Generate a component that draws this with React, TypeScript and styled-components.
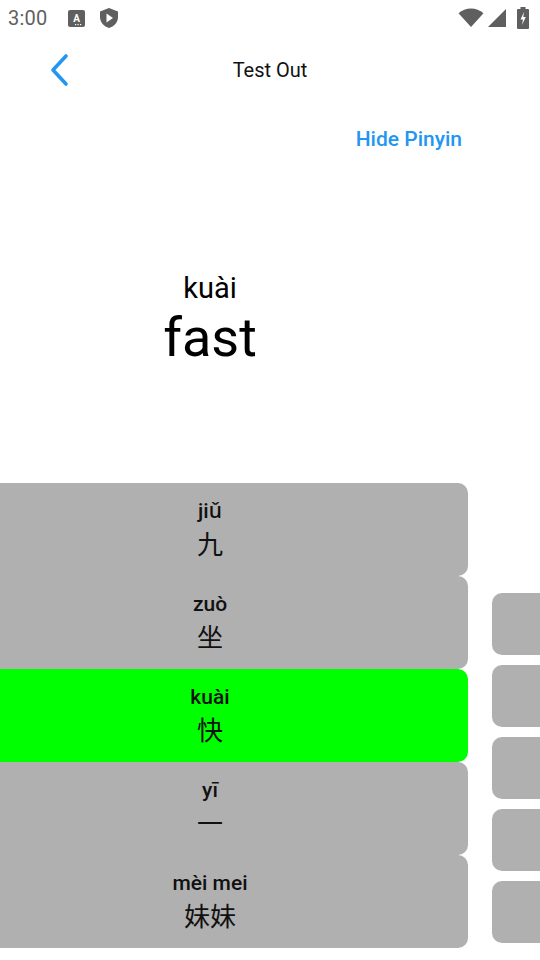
import React from "react";
import styled, { createGlobalStyle } from "styled-components";

const GlobalStyle = createGlobalStyle`
  html, body {
    margin: 0;
    padding: 0;
    background: #ffffff;
    overflow: hidden;
  }
  body {
    font-family: Roboto, "Noto Sans", "Noto Sans CJK SC", sans-serif;
    color: #000000;
  }
`;

const Screen = styled.div`
  width: 540px;
  height: 960px;
  display: flex;
  flex-direction: column;
  overflow: hidden;
  background: #ffffff;
`;

const StatusBar = styled.div`
  height: 36px;
  display: flex;
  align-items: center;
  padding: 0 10px 0 8px;
  color: #5f5f5f;
`;

const Time = styled.span`
  font-size: 20px;
  letter-spacing: 0.2px;
  margin-right: 6px;
`;

const StatusLeft = styled.div`
  display: flex;
  align-items: center;
  gap: 15px;
  flex: 1;
`;

const StatusRight = styled.div`
  display: flex;
  align-items: center;
  gap: 2px;
`;

const AppBar = styled.div`
  height: 68px;
  position: relative;
  display: flex;
  align-items: center;
  justify-content: center;
`;

const BackButton = styled.button`
  position: absolute;
  left: 42px;
  top: 16px;
  width: 36px;
  height: 36px;
  border: none;
  background: none;
  padding: 0;
  display: flex;
  align-items: center;
  justify-content: center;
`;

const Title = styled.h1`
  margin: 0;
  font-size: 20px;
  font-weight: 400;
  color: #111111;
`;

const ToggleRow = styled.div`
  display: flex;
  justify-content: flex-end;
  padding: 23px 78px 0 0;
`;

const ToggleLink = styled.button`
  border: none;
  background: none;
  padding: 0;
  font-family: Roboto, sans-serif;
  font-size: 21px;
  font-weight: 500;
  color: #2196f3;
  line-height: 25px;
`;

const Prompt = styled.div`
  height: 331px;
  display: flex;
  flex-direction: column;
  align-items: center;
  padding: 119px 120px 0 0;
  box-sizing: border-box;
`;

const PromptPinyin = styled.div`
  font-size: 29px;
  line-height: 34px;
`;

const PromptWord = styled.div`
  font-size: 54px;
  line-height: 64px;
  margin-top: 1px;
`;

const Board = styled.div`
  display: flex;
  align-items: flex-end;
  gap: 24px;
`;

const Choices = styled.div`
  display: flex;
  flex-direction: column;
  width: 516px;
  margin-left: -48px;
  flex-shrink: 0;
`;

const Choice = styled.div<{ $correct?: boolean }>`
  height: 93px;
  border-radius: 10px;
  background: ${(p) => (p.$correct ? "#00ff00" : "#b0b0b0")};
  display: flex;
  flex-direction: column;
  align-items: center;
  padding-top: 15px;
  box-sizing: border-box;
`;

const ChoicePinyin = styled.div`
  font-size: 21px;
  font-weight: 500;
  line-height: 26px;
  color: #111111;
`;

const ChoiceHanzi = styled.div`
  font-family: "Noto Sans CJK SC", sans-serif;
  font-size: 26px;
  line-height: 38px;
  color: #111111;
`;

const Slots = styled.div`
  display: flex;
  flex-direction: column;
  gap: 10px;
  margin-bottom: 5px;
  flex-shrink: 0;
`;

const Slot = styled.div`
  width: 62px;
  height: 62px;
  border-radius: 10px;
  background: #b0b0b0;
`;

const choices = [
  { pinyin: "jiǔ", hanzi: "九" },
  { pinyin: "zuò", hanzi: "坐" },
  { pinyin: "kuài", hanzi: "快", correct: true },
  { pinyin: "yī", hanzi: "一" },
  { pinyin: "mèi mei", hanzi: "妹妹" },
];

function KeyboardIcon() {
  return (
    <svg width="17" height="17" viewBox="0 0 17 17">
      <rect x="0" y="0" width="17" height="17" rx="2" fill="#5f5f5f" />
      <text x="8.5" y="11.5" textAnchor="middle" fontSize="10" fontWeight="700" fill="#fff" fontFamily="Roboto, sans-serif">A</text>
      <rect x="7" y="14" width="1.2" height="1.2" fill="#fff" />
      <rect x="9.5" y="14" width="1.2" height="1.2" fill="#fff" />
      <rect x="12" y="14" width="1.2" height="1.2" fill="#fff" />
    </svg>
  );
}

function ShieldIcon() {
  return (
    <svg width="18" height="20" viewBox="0 0 18 20">
      <path d="M9 0 L18 3.5 V9 C18 14.5 14 18.5 9 20 C4 18.5 0 14.5 0 9 V3.5 Z" fill="#5f5f5f" />
      <path d="M6.5 5.5 L13 10 L6.5 14.5 Z" fill="#fff" />
    </svg>
  );
}

function WifiIcon() {
  return (
    <svg width="26" height="20" viewBox="0 0 26 20" style={{ marginRight: 1 }}>
      <path d="M13 19 L0.5 5.2 C4 2.2 8.3 0.5 13 0.5 C17.7 0.5 22 2.2 25.5 5.2 Z" fill="#5f5f5f" />
    </svg>
  );
}

function SignalIcon() {
  return (
    <svg width="20" height="20" viewBox="0 0 20 20">
      <path d="M1 19 L19 1 V19 Z" fill="#5f5f5f" />
    </svg>
  );
}

function BatteryIcon() {
  return (
    <svg width="14" height="22" viewBox="0 0 14 22" style={{ marginLeft: 7 }}>
      <rect x="4.5" y="0" width="5" height="2.5" fill="#5f5f5f" />
      <rect x="1" y="2" width="12" height="20" rx="1" fill="#5f5f5f" />
      <path d="M8 5 L4.5 12.5 H7 L6 18 L9.8 10 H7.3 Z" fill="#fff" />
    </svg>
  );
}

function ChevronLeft() {
  return (
    <svg width="24" height="34" viewBox="0 0 24 34">
      <path d="M18 3 L5 17 L18 31" fill="none" stroke="#2196f3" strokeWidth="3.6" strokeLinecap="round" strokeLinejoin="round" />
    </svg>
  );
}

export default function App() {
  return (
    <>
      <GlobalStyle />
      <Screen>
        <StatusBar>
          <StatusLeft>
            <Time>3:00</Time>
            <KeyboardIcon />
            <ShieldIcon />
          </StatusLeft>
          <StatusRight>
            <WifiIcon />
            <SignalIcon />
            <BatteryIcon />
          </StatusRight>
        </StatusBar>
        <AppBar>
          <BackButton aria-label="Back">
            <ChevronLeft />
          </BackButton>
          <Title>Test Out</Title>
        </AppBar>
        <ToggleRow>
          <ToggleLink>Hide Pinyin</ToggleLink>
        </ToggleRow>
        <Prompt>
          <PromptPinyin>kuài</PromptPinyin>
          <PromptWord>fast</PromptWord>
        </Prompt>
        <Board>
          <Choices>
            {choices.map((c) => (
              <Choice key={c.hanzi} $correct={c.correct}>
                <ChoicePinyin>{c.pinyin}</ChoicePinyin>
                <ChoiceHanzi>{c.hanzi}</ChoiceHanzi>
              </Choice>
            ))}
          </Choices>
          <Slots>
            {[0, 1, 2, 3, 4].map((i) => (
              <Slot key={i} />
            ))}
          </Slots>
        </Board>
      </Screen>
    </>
  );
}
